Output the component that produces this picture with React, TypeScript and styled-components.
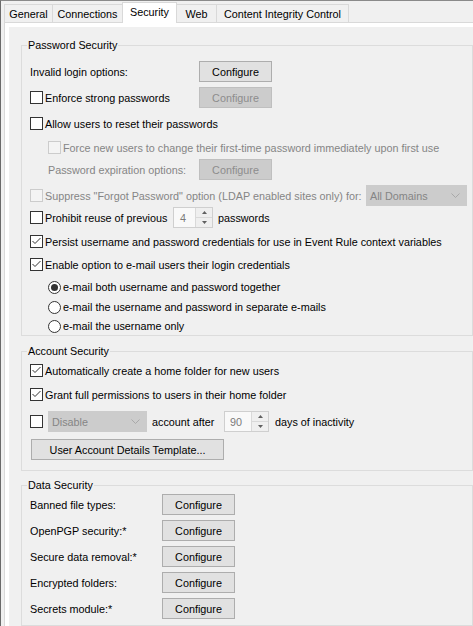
import React from 'react'
import styled, { createGlobalStyle } from 'styled-components'

const GlobalStyle = createGlobalStyle`
    html, body {
        margin: 0;
        padding: 0;
        background: #f0f0f0;
        overflow: hidden;
    }
    body {
        font-family: "Liberation Sans", Arial, sans-serif;
        font-size: 10.8px;
        color: #000;
    }
`

const tabs = [
    { label: 'General', w: 49 },
    { label: 'Connections', w: 71 },
    { label: 'Security', w: 55, active: true },
    { label: 'Web', w: 41 },
    { label: 'Content Integrity Control', w: 133 },
]

const dataRows = [
    'Banned file types:',
    'OpenPGP security:*',
    'Secure data removal:*',
    'Encrypted folders:',
    'Secrets module:*',
]

const Check = ({ checked, disabled }: { checked?: boolean; disabled?: boolean }) => (
    <Box $disabled={disabled}>
        {checked && (
            <svg width="11" height="11" viewBox="0 0 11 11">
                <polyline points="1.5,5 4,7.5 9.5,2" fill="none" stroke="#333" strokeWidth="1" />
            </svg>
        )}
    </Box>
)

const Chevron = () => (
    <svg width="9" height="5" viewBox="0 0 9 5">
        <polyline points="0.5,0.5 4.5,4.5 8.5,0.5" fill="none" stroke="#a9a9a9" strokeWidth="1" />
    </svg>
)

const Spinner = ({ value, w, pad }: { value: string; w: number; pad: number }) => (
    <Spin $w={w}>
        <SpinValue $pad={pad}>{value}</SpinValue>
        <SpinButtons>
            <SpinHalf>
                <svg width="5" height="3" viewBox="0 0 5 3"><polygon points="0,3 2.5,0 5,3" fill="#606060" /></svg>
            </SpinHalf>
            <SpinHalf $down>
                <svg width="5" height="3" viewBox="0 0 5 3"><polygon points="0,0 2.5,3 5,0" fill="#606060" /></svg>
            </SpinHalf>
        </SpinButtons>
    </Spin>
)

export default function App() {
    return (
        <Window>
            <GlobalStyle />
            <TabStrip>
                {tabs.map((t, i) => (
                    <Tab key={t.label} $w={t.w} $active={t.active} $first={i === 0}>
                        {t.label}
                    </Tab>
                ))}
            </TabStrip>
            <Page>
                <PageInner>
                    <Group $mt={10} $pb={0}>
                        <Legend>Password Security</Legend>
                        <Row $mt={8}>
                            <Text $w={169}>Invalid login options:</Text>
                            <Button>Configure</Button>
                        </Row>
                        <Row $mt={5}>
                            <Check />
                            <Text $w={154}>Enforce strong passwords</Text>
                            <Button disabled>Configure</Button>
                        </Row>
                        <Row $mt={5}>
                            <Check />
                            <Text>Allow users to reset their passwords</Text>
                        </Row>
                        <Row $mt={3} $indent>
                            <Check disabled />
                            <Text $disabled>Force new users to change their first-time password immediately upon first use</Text>
                        </Row>
                        <Row $mt={1} $indent>
                            <Text $w={151} $disabled>Password expiration options:</Text>
                            <Button disabled>Configure</Button>
                        </Row>
                        <Row $mt={5}>
                            <Check disabled />
                            <Text $w={321} $disabled>Suppress "Forgot Password" option (LDAP enabled sites only) for:</Text>
                            <Combo $w={101}>
                                <span>All Domains</span>
                                <Chevron />
                            </Combo>
                        </Row>
                        <Row $mt={1}>
                            <Check />
                            <Text $w={128}>Prohibit reuse of previous</Text>
                            <Spinner value="4" w={40} pad={6} />
                            <Text $ml={5}>passwords</Text>
                        </Row>
                        <Row $mt={3}>
                            <Check checked />
                            <Text>Persist username and password credentials for use in Event Rule context variables</Text>
                        </Row>
                        <Row $mt={2}>
                            <Check checked />
                            <Text>Enable option to e-mail users their login credentials</Text>
                        </Row>
                        <Row $mt={2} $h={20} $indent>
                            <Radio $on />
                            <Text>e-mail both username and password together</Text>
                        </Row>
                        <Row $h={20} $indent>
                            <Radio />
                            <Text>e-mail the username and password in separate e-mails</Text>
                        </Row>
                        <Row $h={18} $indent>
                            <Radio />
                            <Text>e-mail the username only</Text>
                        </Row>
                    </Group>

                    <Group $mt={7} $pb={10}>
                        <Legend>Account Security</Legend>
                        <Row $mt={1}>
                            <Check checked />
                            <Text>Automatically create a home folder for new users</Text>
                        </Row>
                        <Row $mt={3}>
                            <Check checked />
                            <Text>Grant full permissions to users in their home folder</Text>
                        </Row>
                        <Row $mt={6}>
                            <Check />
                            <Combo $w={99} $ml={3}>
                                <span>Disable</span>
                                <Chevron />
                            </Combo>
                            <Text $w={72} $ml={5}>account after</Text>
                            <Spinner value="90" w={45} pad={5} />
                            <Text $ml={6}>days of inactivity</Text>
                        </Row>
                        <Row $mt={7}>
                            <Button $w={193} $ml={1}>User Account Details Template...</Button>
                        </Row>
                    </Group>

                    <Group $mt={6} $pb={6}>
                        <Legend>Data Security</Legend>
                        {dataRows.map((label, i) => (
                            <Row key={label} $mt={i === 0 ? 1 : 5}>
                                <Text $w={132}>{label}</Text>
                                <Button>Configure</Button>
                            </Row>
                        ))}
                    </Group>
                </PageInner>
            </Page>
        </Window>
    )
}

const Window = styled.div`
    width: 473px;
    height: 626px;
    box-sizing: border-box;
    border-top: 1px solid #8a8a8a;
    border-left: 1px solid #6a6a6a;
    background: #f0f0f0;
    overflow: hidden;
`

const TabStrip = styled.div`
    position: relative;
    z-index: 1;
    display: flex;
    align-items: flex-end;
    height: 21px;
    padding-left: 3px;
`

const Tab = styled.div<{ $w: number; $active?: boolean; $first?: boolean }>`
    box-sizing: border-box;
    flex: none;
    width: ${p => p.$w}px;
    height: ${p => (p.$active ? 21 : 18)}px;
    margin-bottom: ${p => (p.$active ? -1 : 0)}px;
    margin-left: ${p => (p.$first ? 0 : -1)}px;
    border: 1px solid #d9d9d9;
    border-bottom: none;
    background: ${p => (p.$active ? '#ffffff' : '#f0f0f0')};
    position: relative;
    z-index: ${p => (p.$active ? 2 : 1)};
    display: flex;
    align-items: center;
    justify-content: center;
    padding-bottom: ${p => (p.$active ? 3 : 0)}px;
    white-space: nowrap;
`

const Page = styled.div`
    width: 620px;
    margin-left: 3px;
    border-top: 1px solid #d9d9d9;
    border-left: 1px solid #d9d9d9;
    background: #ffffff;
    padding: 4px 0 0 4px;
`

const PageInner = styled.div`
    background: #f0f0f0;
    padding: 0 0 20px 12px;
    overflow: hidden;
`

const Group = styled.fieldset<{ $mt: number; $pb: number }>`
    box-sizing: border-box;
    width: 452px;
    min-width: 0;
    margin: ${p => p.$mt}px 0 0 0;
    padding: 0 0 ${p => p.$pb}px 8px;
    border: 1px solid #dcdcdc;
`

const Legend = styled.legend`
    margin-left: -3px;
    padding: 0 1px;
    line-height: 16px;
`

const Row = styled.div<{ $mt?: number; $h?: number; $indent?: boolean }>`
    display: flex;
    align-items: center;
    height: ${p => p.$h ?? 21}px;
    margin-top: ${p => p.$mt ?? 0}px;
    padding-left: ${p => (p.$indent ? 18 : 0)}px;
    white-space: nowrap;
`

const Text = styled.span<{ $w?: number; $ml?: number; $disabled?: boolean }>`
    flex: none;
    ${p => (p.$w ? `width: ${p.$w}px;` : '')}
    margin-left: ${p => p.$ml ?? 0}px;
    color: ${p => (p.$disabled ? '#858585' : '#000000')};
`

const Box = styled.span<{ $disabled?: boolean }>`
    box-sizing: border-box;
    flex: none;
    width: 13px;
    height: 13px;
    margin-right: 2px;
    border: 1px solid ${p => (p.$disabled ? '#cccccc' : '#333333')};
    background: ${p => (p.$disabled ? '#f4f4f4' : '#ffffff')};
    display: flex;
    align-items: center;
    justify-content: center;
`

const Radio = styled.span<{ $on?: boolean }>`
    box-sizing: border-box;
    flex: none;
    width: 13px;
    height: 13px;
    margin-right: 2px;
    border: 1px solid #333333;
    border-radius: 50%;
    background: #ffffff;
    display: flex;
    align-items: center;
    justify-content: center;

    &::after {
        content: '';
        width: 7px;
        height: 7px;
        border-radius: 50%;
        background: ${p => (p.$on ? '#333333' : 'transparent')};
    }
`

const Button = styled.button<{ $w?: number; $ml?: number }>`
    box-sizing: border-box;
    flex: none;
    width: ${p => p.$w ?? 73}px;
    height: 21px;
    margin: 0 0 0 ${p => p.$ml ?? 0}px;
    padding: 0;
    font: inherit;
    color: #000000;
    background: #e1e1e1;
    border: 1px solid #adadad;
    border-radius: 0;

    &:disabled {
        color: #8c8c8c;
        background: #cccccc;
        border-color: #bfbfbf;
    }
`

const Combo = styled.div<{ $w: number; $ml?: number }>`
    box-sizing: border-box;
    flex: none;
    width: ${p => p.$w}px;
    height: 21px;
    margin-left: ${p => p.$ml ?? 0}px;
    padding: 0 6px 0 3px;
    background: #cccccc;
    border: 1px solid #cccccc;
    color: #858585;
    display: flex;
    align-items: center;
    justify-content: space-between;
`

const Spin = styled.div<{ $w: number }>`
    box-sizing: border-box;
    flex: none;
    width: ${p => p.$w}px;
    height: 21px;
    border: 1px solid #cfcfcf;
    background: #f9f9f9;
    display: flex;
`

const SpinValue = styled.div<{ $pad: number }>`
    flex: 1;
    display: flex;
    align-items: center;
    padding-left: ${p => p.$pad}px;
    color: #7a7a7a;
`

const SpinButtons = styled.div`
    width: 16px;
    border-left: 1px solid #d9d9d9;
    display: flex;
    flex-direction: column;
`

const SpinHalf = styled.div<{ $down?: boolean }>`
    flex: 1;
    display: flex;
    align-items: center;
    justify-content: center;
    background: #efefef;
    ${p => (p.$down ? 'border-top: 1px solid #d9d9d9;' : '')}
`
